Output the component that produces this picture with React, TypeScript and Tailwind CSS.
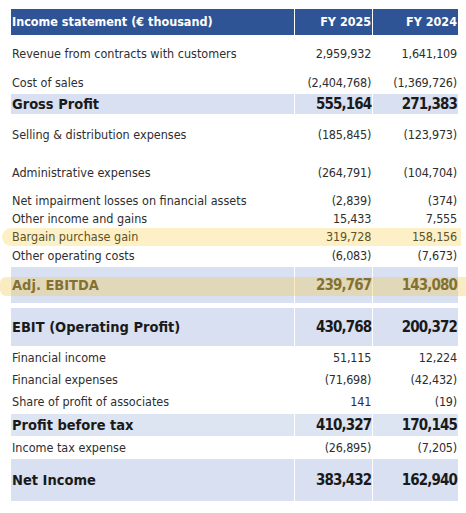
import React from "react";

type Row = {
  label: string;
  a: string;
  b: string;
  h: number;
  mt?: number;
  kind?: "plain" | "total" | "bargain" | "ebitda";
  band?: string;
};

const rows: Row[] = [
  { label: "Revenue from contracts with customers", a: "2,959,932", b: "1,641,109", h: 37 },
  { label: "Cost of sales", a: "(2,404,768)", b: "(1,369,726)", h: 22, mt: 0 },
  { label: "Gross Profit", a: "555,164", b: "271,383", h: 20, kind: "total", band: "bg-[#d9e0f2]" },
  { label: "Selling & distribution expenses", a: "(185,845)", b: "(123,973)", h: 20, mt: 11 },
  { label: "Administrative expenses", a: "(264,791)", b: "(104,704)", h: 20, mt: 18 },
  { label: "Net impairment losses on financial assets", a: "(2,839)", b: "(374)", h: 18, mt: 9 },
  { label: "Other income and gains", a: "15,433", b: "7,555", h: 17 },
  { label: "Bargain purchase gain", a: "319,728", b: "158,156", h: 18, mt: 1, kind: "bargain" },
  { label: "Other operating costs", a: "(6,083)", b: "(7,673)", h: 18, mt: 1 },
  { label: "Adj. EBITDA", a: "239,767", b: "143,080", h: 36, mt: 2, kind: "ebitda", band: "bg-[#d9e0f2]" },
  { label: "EBIT (Operating Profit)", a: "430,768", b: "200,372", h: 38, mt: 5, kind: "total", band: "bg-[#d9e0f2]" },
  { label: "Financial income", a: "51,115", b: "12,224", h: 22, mt: 1 },
  { label: "Financial expenses", a: "(71,698)", b: "(42,432)", h: 22 },
  { label: "Share of profit of associates", a: "141", b: "(19)", h: 22 },
  { label: "Profit before tax", a: "410,327", b: "170,145", h: 22, mt: 1, kind: "total", band: "bg-[#dde5f2]" },
  { label: "Income tax expense", a: "(26,895)", b: "(7,205)", h: 22, mt: 1 },
  { label: "Net Income", a: "383,432", b: "162,940", h: 42, kind: "total", band: "bg-[#d9e0f2]" },
];

const font = { fontFamily: '"Liberation Sans Narrow", "DejaVu Sans Condensed", Roboto, sans-serif' };

function Line({ r }: { r: Row }) {
  const bold = r.kind === "total" || r.kind === "ebitda";
  const lbl = bold
    ? "text-[14.5px] font-bold text-[#1a1a1a]"
    : "text-[12.5px] text-[#2e2e2e]";
  const num = bold
    ? "text-[15px] font-bold tracking-[-0.9px] text-[#1a1a1a]"
    : "text-[12.5px] tracking-[-0.2px] text-[#2e2e2e]";
  const tone =
    r.kind === "ebitda" ? "text-[#4a4322]" : r.kind === "bargain" ? "text-[#5e5226]" : "";
  const cell = `flex items-center pt-[1px] ${r.band ?? ""}`;
  return (
    <div className="relative flex" style={{ height: r.h, marginTop: r.mt ?? 0 }}>
      {r.kind === "bargain" && (
        <div className="absolute top-0 bottom-0 left-[-9px] right-[-3px] rounded-l-full bg-[#fdf0c6]" />
      )}
      {r.kind === "ebitda" && (
        <div className="absolute top-[10px] h-[19px] left-[-11px] right-[-8px] rounded-l-md bg-[#f0c850]/35 z-10" />
      )}
      <div className={`${cell} relative w-[284px] pl-[1px] ${lbl} ${tone}`}>{r.label}</div>
      <div className={`${cell} relative w-[77px] ml-[1px] justify-end pr-[1px] ${num} ${tone}`}>{r.a}</div>
      <div className={`${cell} relative w-[85px] ml-[1px] justify-end pr-[1px] ${num} ${tone}`}>{r.b}</div>
    </div>
  );
}

export default function App() {
  return (
    <div className="w-[466px] h-[513px] bg-white overflow-hidden pt-[9px] pl-[11px]" style={font}>
      <div className="w-[447px]">
        <div className="flex h-[26px] text-[12.5px] font-bold text-white">
          <div className="w-[284px] bg-[#2e5495] flex items-center pl-[1px]">Income statement (€ thousand)</div>
          <div className="w-[77px] ml-[1px] bg-[#2e5495] flex items-center justify-end pr-[1px]">FY 2025</div>
          <div className="w-[85px] ml-[1px] bg-[#2e5495] flex items-center justify-end pr-[1px]">FY 2024</div>
        </div>
        {rows.map((r) => (
          <Line key={r.label} r={r} />
        ))}
      </div>
    </div>
  );
}
